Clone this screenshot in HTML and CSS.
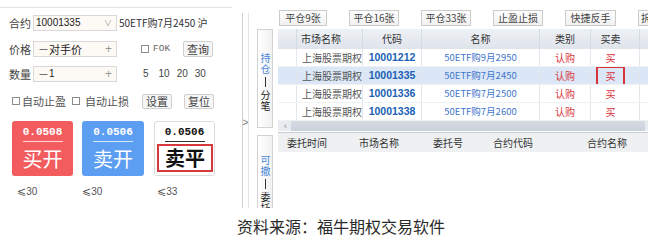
FILE: index.html
```html
<!DOCTYPE html>
<html lang="zh-CN">
<head>
<meta charset="utf-8">
<title>期权交易</title>
<link rel="stylesheet" href="styles.css">
</head>
<body>
<div class="app">
  <section class="left">
    <div class="row r1">
      <span class="lbl">合约</span>
      <div class="inp sel"><span class="code">10001335</span><span class="caret">∨</span></div>
      <span class="cname">50ETF购7月2450&nbsp;沪</span>
    </div>
    <div class="row r2">
      <span class="lbl">价格</span>
      <div class="inp"><span class="minus">－</span><span class="val">对手价</span><span class="plus">+</span></div>
      <span class="chk chk-fok"></span><span class="fok">FOK</span>
      <span class="btn btn-query">查询</span>
    </div>
    <div class="row r3">
      <span class="lbl">数量</span>
      <div class="inp"><span class="minus">－</span><span class="val num">1</span><span class="plus">+</span></div>
      <div class="qty"><span>5</span><span>10</span><span>20</span><span>30</span></div>
    </div>
    <div class="row r4">
      <span class="chk"></span><span class="opt">自动止盈</span>
      <span class="chk chk2"></span><span class="opt opt2">自动止损</span>
      <span class="btn btn-set">设置</span>
      <span class="btn btn-reset">复位</span>
    </div>
    <div class="orders">
      <div class="big red">
        <div class="price">0.0508</div>
        <div class="rule"></div>
        <div class="act">买开</div>
      </div>
      <div class="big blue">
        <div class="price">0.0506</div>
        <div class="rule"></div>
        <div class="act">卖开</div>
      </div>
      <div class="big white">
        <div class="price">0.0506</div>
        <div class="rule"></div>
        <div class="act">卖平</div>
      </div>
    </div>
    <div class="limits"><span><b>⩽</b>30</span><span><b>⩽</b>30</span><span><b>⩽</b>33</span></div>
  </section>

  <div class="splitter"><span class="chev">&gt;</span></div>

  <section class="right">
    <div class="toolbar">
      <span class="tb w48">平仓9张</span>
      <span class="tb w50">平仓16张</span>
      <span class="tb w50">平仓33张</span>
      <span class="tb w50">止盈止损</span>
      <span class="tb w51">快捷反手</span>
      <span class="tb w40">拆</span>
    </div>
    <div class="body">
      <div class="tabs">
        <div class="tab tab1"><span class="v on">持仓</span><i class="bar"></i><span class="v">分笔</span></div>
        <div class="tab tab2"><span class="v on">可撤</span><i class="bar"></i><span class="v">委托</span></div>
      </div>
      <div class="tables">
        <div class="grid head">
          <span></span><span class="l">市场名称</span><span>代码</span><span>名称</span><span>类别</span><span class="bs">买卖</span><span></span>
        </div>
        <div class="grid rowd">
          <span></span><span class="l mk">上海股票期权</span><span class="cd">10001212</span><span class="nm">50ETF购9月2950</span><span class="rd">认购</span><span class="rd bs">买</span><span></span>
        </div>
        <div class="grid rowd sel">
          <span></span><span class="l mk">上海股票期权</span><span class="cd">10001335</span><span class="nm">50ETF购7月2450</span><span class="rd">认购</span><span class="rd bs"><em class="mark">买</em></span><span></span>
        </div>
        <div class="grid rowd">
          <span></span><span class="l mk">上海股票期权</span><span class="cd">10001336</span><span class="nm">50ETF购7月2500</span><span class="rd">认购</span><span class="rd bs">买</span><span></span>
        </div>
        <div class="grid rowd">
          <span></span><span class="l mk">上海股票期权</span><span class="cd">10001338</span><span class="nm">50ETF购7月2600</span><span class="rd">认购</span><span class="rd bs">买</span><span></span>
        </div>
        <div class="scroll"><span class="sarrow">‹</span><div class="thumb"></div></div>
        <div class="ohead">
          <span class="c1">委托时间</span><span class="c2">市场名称</span><span class="c3">委托号</span><span class="c4">合约代码</span><span class="c5">合约名称</span>
        </div>
      </div>
    </div>
  </section>
</div>
<div class="caption">资料来源：福牛期权交易软件</div>
</body>
</html>
```
FILE: styles.css
```css
* { box-sizing: border-box; margin: 0; padding: 0; }
html, body { background: #fff; }
body {
  font-family: "Noto Sans CJK SC", "Noto Sans", sans-serif;
  font-size: 11px;
  color: #333;
  width: 655px;
  height: 240px;
  overflow: hidden;
}
.app {
  display: flex;
  align-items: flex-start;
  width: 648px;
  height: 208px;
  overflow: hidden;
}

/* ---------- left panel ---------- */
.left {
  flex: none;
  width: 232px;
  margin-top: 7px;
  margin-right: 10px;
  border-top: 1px solid #e4e4e4;
  padding-top: 7px;
}
.row { display: flex; align-items: center; height: 16px; line-height: 16px; }
.r1, .r2, .r3 { padding-left: 9px; }
.r2 { margin-top: 10px; }
.r3 { margin-top: 9px; }
.r4 { margin-top: 11px; padding-left: 12px; }
.lbl { width: 24px; color: #444; }
.inp {
  width: 84px; height: 16px;
  border: 1px solid #d8d8d8;
  background: #fdfaf5;
  display: flex; align-items: center;
  padding: 0 4px;
  line-height: 14px;
}
.inp.sel { padding: 0 4px 0 2px; }
.code { font: 10px/14px "Liberation Sans", sans-serif; color: #222; }
.caret { margin-left: auto; color: #999; font-size: 8px; }
.minus { width: 11px; color: #555; font-size: 11px; }
.val { color: #222; }
.val.num { font: 10px/14px "Liberation Sans", sans-serif; }
.plus { margin-left: auto; color: #999; font: 12px/14px "Liberation Sans", sans-serif; }
.cname { margin-left: 2px; font-size: 10px; color: #333; }
.chk {
  width: 8px; height: 8px;
  border: 1px solid #8c8c8c;
  background: #fff;
  flex: none;
}
.chk-fok { margin-left: 24px; }
.fok { margin-left: 4px; font: 9.5px/16px "Liberation Mono", monospace; color: #666; }
.btn {
  display: inline-flex; align-items: center; justify-content: center;
  width: 30px; height: 15px;
  border: 1px solid #cfcfcf;
  border-radius: 2px;
  background: #f6f6f6;
  color: #444;
  font-size: 11px;
  flex: none;
}
.btn-query { margin-left: 13px; height: 16px; }
.qty { display: flex; margin-left: 26px; font: 10px/16px "Liberation Sans", sans-serif; color: #444; }
.qty span { margin-right: 7px; }
.qty span:first-child { margin-right: 10px; }
.opt { margin-left: 2px; color: #555; }
.chk2 { margin-left: 6px; }
.opt2 { margin-left: 5px; }
.btn-set { margin-left: 13px; }
.btn-reset { margin-left: 12px; }

.orders { display: flex; margin-top: 12px; padding-left: 12px; }
.big {
  width: 61px; height: 55px;
  border-radius: 3px;
  padding-top: 4px;
  text-align: center;
  color: #fff;
  flex: none;
}
.red { background: #f25c5f; }
.blue { background: #5c9ef2; width: 62px; margin-left: 9px; }
.white {
  background: #fff;
  border: 1px solid #dcdcdc;
  padding-top: 3px;
  margin-left: 10px;
  color: #111;
}
.price { font: bold 11px/14px "Liberation Mono", monospace; }
.rule { width: 40px; height: 1px; margin: 2px auto 0; background: rgba(255,255,255,.75); }
.white .rule { background: #333; }
.act { font-size: 20px; line-height: 22px; margin-top: 6px; }
.white .act {
  margin: 2px 1px 0 2px;
  height: 28px;
  border: 2px solid #d5383d;
  line-height: 24px;
  font-weight: bold;
}
.limits { display: flex; margin-top: 9px; padding-left: 17px; font: 10px/14px "Liberation Sans", sans-serif; color: #555; }
.limits span { width: 65px; flex: none; }
.limits span:nth-child(2) { width: 75px; }
.limits b { font-weight: normal; font-family: "DejaVu Sans", sans-serif; font-size: 11px; }

/* ---------- splitter ---------- */
.splitter {
  flex: none;
  width: 7px; height: 195px;
  margin-top: 13px;
  border-left: 1px solid #cfcfcf;
  border-right: 1px solid #e6e6e6;
  display: flex; justify-content: center;
}
.chev { margin-top: 104px; font: 10px/12px "Liberation Sans", sans-serif; color: #777; }

/* ---------- right panel ---------- */
.right { flex: none; width: 400px; }
.toolbar { display: flex; gap: 22px; margin-top: 10px; padding-left: 30px; }
.tb {
  flex: none;
  height: 16px;
  border: 1px solid #cbcbcb;
  background: linear-gradient(#fdfdfd, #f1f1f1);
  font-size: 10px; line-height: 14px;
  color: #444;
  text-align: center;
}
.w48 { width: 48px; } .w50 { width: 50px; } .w51 { width: 51px; } .w40 { width: 40px; padding-left: 2px; text-align: left; }

.body { display: flex; margin-top: 3px; padding-left: 8px; }
.tabs { flex: none; width: 16px; display: flex; flex-direction: column; gap: 7px; }
.tab {
  width: 16px; height: 99px;
  border: 1px solid #d3d3d3;
  background: linear-gradient(to right, #ffffff, #f1f1f1);
  display: flex; flex-direction: column; align-items: center;
  font-size: 10px;
  color: #222;
}
.tab1 { padding-top: 23px; }
.tab2 { padding-top: 19px; height: 97px; }
.tab .v { writing-mode: vertical-rl; letter-spacing: 1px; line-height: 14px; }
.tab .on { color: #4a86d9; }
.bar { display: block; width: 1px; height: 10px; margin: 2px 0 3px; background: #333; }

.tables { flex: none; width: 380px; margin-left: 5px; }
.grid {
  display: grid;
  grid-template-columns: 19px 66px 59px 118px 51px 49px 30px;
  height: 18px;
  line-height: 17px;
  font-size: 10px;
}
.grid span { border-right: 1px solid #e3e6eb; text-align: center; white-space: nowrap; overflow: hidden; }
.grid .l { text-align: left; padding-left: 4px; }
.grid .bs { padding-right: 9px; }
.head { height: 20px; line-height: 20px; background: linear-gradient(#eef1f5, #dfe4eb); color: #333; }
.head span { border-right-color: #d5dbe3; }
.rowd { border-bottom: 1px solid #f0f1f3; }
.rowd.sel { background: #dbe7f6; }
.mk { color: #555; padding-left: 5px !important; }
.cd { font: bold 10.5px/17px "Liberation Sans", sans-serif; color: #2060b5; }
.nm { color: #3f75cb; font-size: 9.5px; }
.rd { color: #d9363e; }
.mark {
  display: inline-block;
  font-style: normal;
  width: 29px; height: 20px;
  margin-top: -1px;
  border: 2px solid #d8343b;
  line-height: 16px;
}
.scroll {
  height: 10px;
  background: #e8ebef;
  display: flex; align-items: center;
  padding-left: 6px;
}
.sarrow { font: 9px/10px "Liberation Sans", sans-serif; color: #888; width: 7px; }
.thumb { height: 10px; width: 354px; background: linear-gradient(#d6dce4, #c9d0da); }
.ohead {
  margin-top: 1px;
  border-top: 1px solid #c9ced5;
  height: 20px;
  background: #eef0f2;
  display: flex;
  padding-left: 9px;
  font-size: 10px; line-height: 19px;
  color: #333;
}
.ohead span { flex: none; }
.c1 { width: 72px; } .c2 { width: 74px; } .c3 { width: 60px; } .c4 { width: 94px; } .c5 { width: 60px; }

.caption {
  margin-top: 8px;
  padding-left: 237px;
  font-size: 16px;
  line-height: 20px;
  color: #2a2a2a;
}
```
